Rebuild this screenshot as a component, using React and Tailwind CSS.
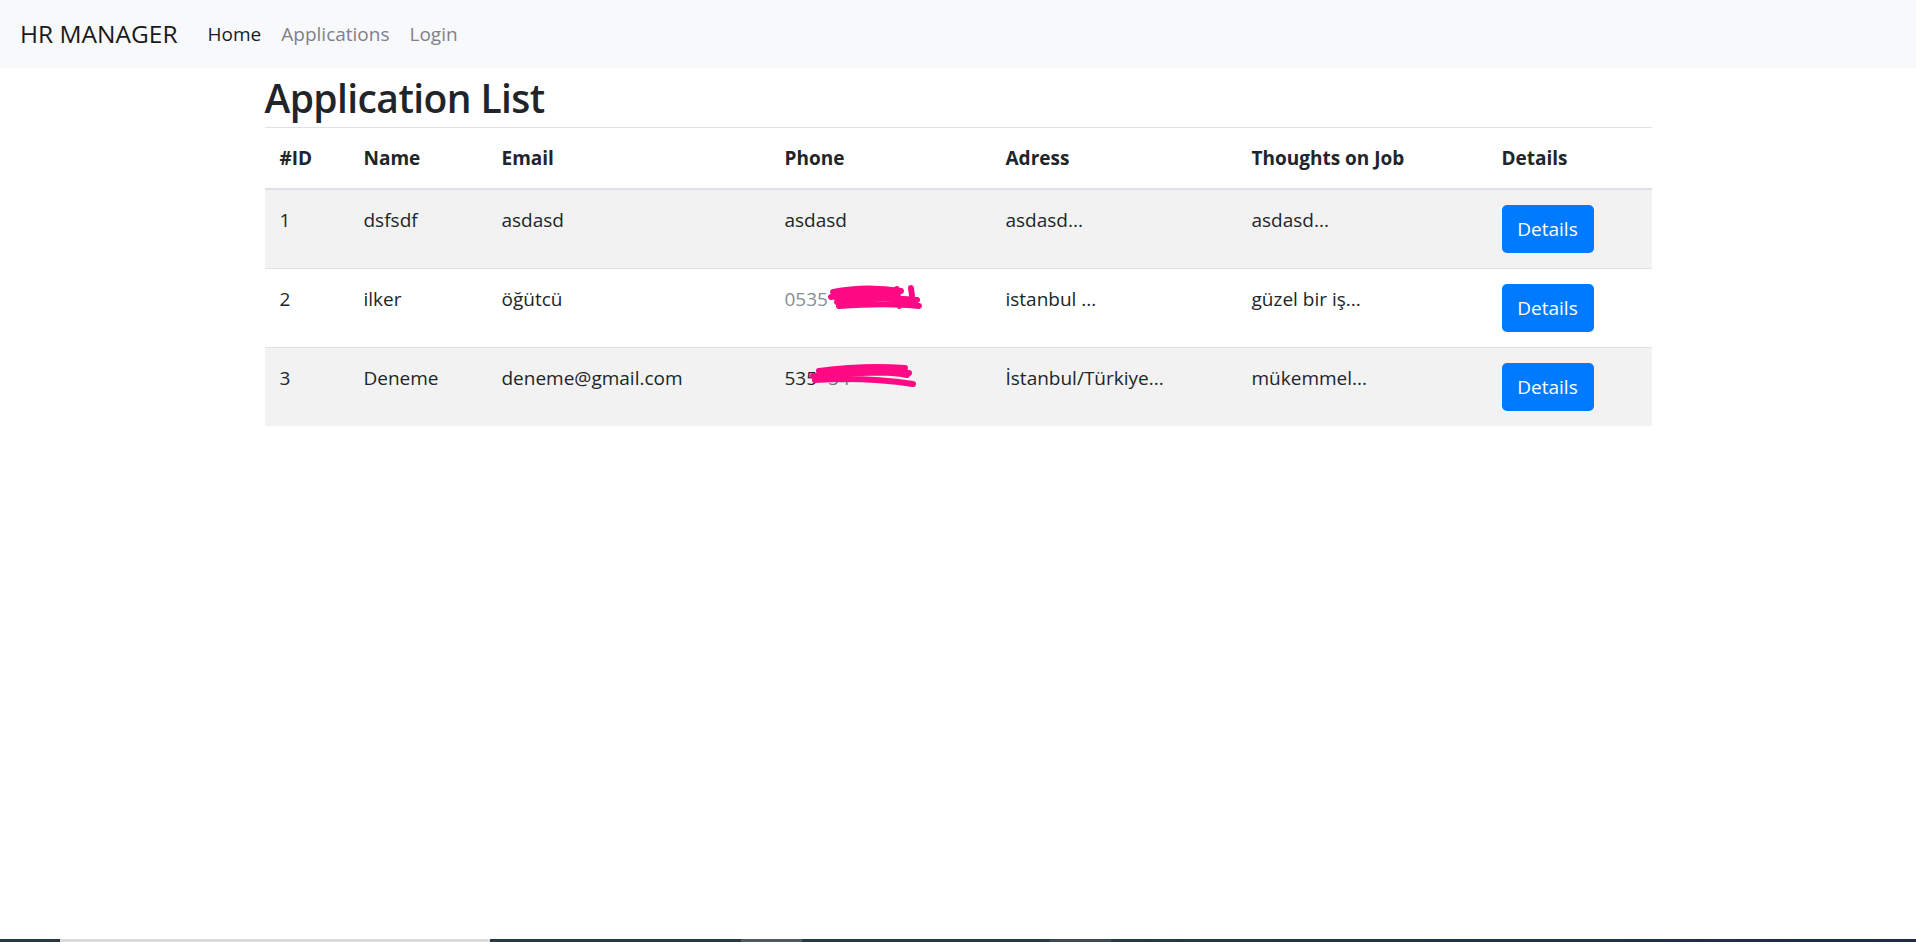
import React from 'react';

const rows = [
    { id: 1, name: 'dsfsdf', email: 'asdasd', phone: 'asdasd', adress: 'asdasd...', thoughts: 'asdasd...' },
    { id: 2, name: 'ilker', email: 'öğütcü', phone: 'p2', adress: 'istanbul ...', thoughts: 'güzel bir iş...' },
    { id: 3, name: 'Deneme', email: 'deneme@gmail.com', phone: 'p3', adress: 'İstanbul/Türkiye...', thoughts: 'mükemmel...' },
];

// the pink scribbles that hide the phone numbers
function Scribble({ variant }) {
    if (variant === 2) {
        return (
            <svg width="100" height="30" viewBox="0 0 100 30" className="absolute left-[42px] top-[0px]">
                <path d="M6 8 C30 3 55 4 74 7 M4 13 C25 9 50 9 70 11 M10 18 C35 14 60 13 90 16 M12 22 C40 20 65 19 92 22 M70 5 L72 22 M84 4 L86 20"
                    stroke="#ff0a84" strokeWidth="6" fill="none" strokeLinecap="round" />
            </svg>
        );
    }
    return (
        <svg width="110" height="30" viewBox="0 0 110 30" className="absolute left-[24px] top-[-2px]">
            <path d="M10 10 C40 6 70 5 96 7 M4 15 C35 12 70 11 100 12 M6 19 C40 17 70 18 104 23 M20 13 C50 11 80 10 98 14"
                stroke="#ff0a84" strokeWidth="6" fill="none" strokeLinecap="round" />
        </svg>
    );
}

function PhoneCell({ row }) {
    if (row.phone === 'p2') {
        return (
            <span className="relative inline-block text-[#868e96]">
                0535
                <Scribble variant={2} />
            </span>
        );
    }
    if (row.phone === 'p3') {
        return (
            <span className="relative inline-block">
                535 <span className="text-[#6f757a]">-34</span>
                <Scribble variant={3} />
            </span>
        );
    }
    return row.phone;
}

export default function App() {
    return (
        <div className="flex flex-col h-[942px] bg-white text-[#212529] font-['Open_Sans','Noto_Sans',sans-serif]">
            <nav className="h-[68px] bg-[#f8f9fa] flex items-center px-[20px]">
                <span className="text-[24.5px] leading-[38px] mr-[20px] text-[#1a1a1a]">HR MANAGER</span>
                <a className="px-[10px] text-[19px] text-[#1a1a1a]">Home</a>
                <a className="px-[10px] text-[19px] text-[#80808a]">Applications</a>
                <a className="px-[10px] text-[19px] text-[#80808a]">Login</a>
            </nav>

            <div className="w-[1387px] mx-auto">
                <h2 className="text-[39px] font-semibold leading-[59px] tracking-[-0.6px]">Application List</h2>
                <table className="w-full text-[19px] leading-[30px] border-collapse">
                    <thead>
                        <tr className="border-t border-b-2 border-t-[#dee2e6] border-b-[#dee2e6] text-left">
                            <th className="w-[84px] px-[15px] py-[15px] font-bold">#ID</th>
                            <th className="w-[138px] px-[15px] py-[15px] font-bold">Name</th>
                            <th className="w-[283px] px-[15px] py-[15px] font-bold">Email</th>
                            <th className="w-[221px] px-[15px] py-[15px] font-bold">Phone</th>
                            <th className="w-[246px] px-[15px] py-[15px] font-bold">Adress</th>
                            <th className="w-[250px] px-[15px] py-[15px] font-bold">Thoughts on Job</th>
                            <th className="px-[15px] py-[15px] font-bold">Details</th>
                        </tr>
                    </thead>
                    <tbody>
                        {rows.map((row, i) => (
                            <tr key={row.id} className={`border-t border-[#dee2e6] ${i % 2 === 0 ? 'bg-[#f2f2f2]' : 'bg-white'}`}>
                                <td className="px-[15px] py-[15px] align-top">{row.id}</td>
                                <td className="px-[15px] py-[15px] align-top">{row.name}</td>
                                <td className="px-[15px] py-[15px] align-top">{row.email}</td>
                                <td className="px-[15px] py-[15px] align-top"><PhoneCell row={row} /></td>
                                <td className="px-[15px] py-[15px] align-top">{row.adress}</td>
                                <td className="px-[15px] py-[15px] align-top">{row.thoughts}</td>
                                <td className="px-[15px] py-[15px] align-top">
                                    <button className="h-[48px] w-[92px] bg-[#007bff] text-white rounded-[5px] text-[19px]">
                                        Details
                                    </button>
                                </td>
                            </tr>
                        ))}
                    </tbody>
                </table>
            </div>

            <div className="flex-1" />

            <div className="h-[3px] flex">
                <div className="w-[60px] bg-[#243a44]" />
                <div className="w-[430px] bg-[#dcdcdc]" />
                <div className="w-[251px] bg-[#243b45]" />
                <div className="w-[61px] bg-[#4d5b65]" />
                <div className="w-[248px] bg-[#243b45]" />
                <div className="w-[61px] bg-[#3b4a55]" />
                <div className="flex-1 bg-gradient-to-r from-[#243b45] to-[#1e2a4a]" />
            </div>
        </div>
    );
}
